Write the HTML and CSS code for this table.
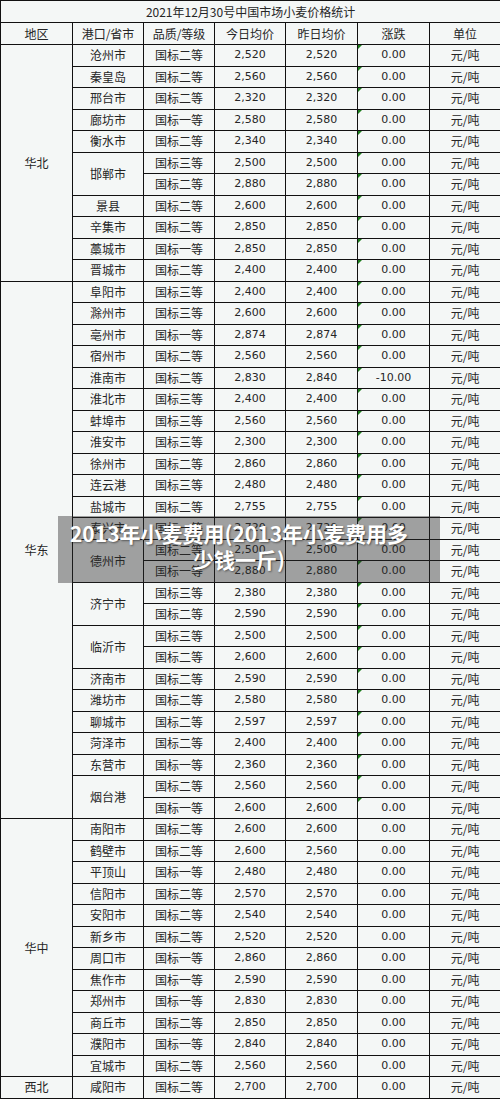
FILE: index.html
```html
<!DOCTYPE html>
<html lang="zh">
<head>
<meta charset="utf-8">
<title>2021年12月30号中国市场小麦价格统计</title>
<link rel="stylesheet" href="styles.css">
</head>
<body>
<div class="page">
<table class="grid">
<colgroup><col class="c1"><col class="c2"><col class="c3"><col class="c4"><col class="c5"><col class="c6"><col class="c7"></colgroup>
<tr class="t"><td colspan="7">2021年12月30号中国市场小麦价格统计</td></tr>
<tr class="h"><td>地区</td><td>港口/省市</td><td>品质/等级</td><td>今日均价</td><td>昨日均价</td><td>涨跌</td><td>单位</td></tr>
<tr><td rowspan="11">华北</td><td>沧州市</td><td>国标二等</td><td class="n">2,520</td><td class="n">2,520</td><td class="n g">0.00</td><td>元/吨</td></tr>
<tr><td>秦皇岛</td><td>国标二等</td><td class="n">2,560</td><td class="n">2,560</td><td class="n g">0.00</td><td>元/吨</td></tr>
<tr><td>邢台市</td><td>国标二等</td><td class="n">2,320</td><td class="n">2,320</td><td class="n g">0.00</td><td>元/吨</td></tr>
<tr><td>廊坊市</td><td>国标一等</td><td class="n">2,580</td><td class="n">2,580</td><td class="n g">0.00</td><td>元/吨</td></tr>
<tr><td>衡水市</td><td>国标二等</td><td class="n">2,340</td><td class="n">2,340</td><td class="n g">0.00</td><td>元/吨</td></tr>
<tr><td rowspan="2">邯郸市</td><td>国标三等</td><td class="n">2,500</td><td class="n">2,500</td><td class="n g">0.00</td><td>元/吨</td></tr>
<tr><td>国标二等</td><td class="n">2,880</td><td class="n">2,880</td><td class="n g">0.00</td><td>元/吨</td></tr>
<tr><td>景县</td><td>国标二等</td><td class="n">2,600</td><td class="n">2,600</td><td class="n g">0.00</td><td>元/吨</td></tr>
<tr><td>辛集市</td><td>国标二等</td><td class="n">2,850</td><td class="n">2,850</td><td class="n g">0.00</td><td>元/吨</td></tr>
<tr><td>藁城市</td><td>国标一等</td><td class="n">2,850</td><td class="n">2,850</td><td class="n g">0.00</td><td>元/吨</td></tr>
<tr><td>晋城市</td><td>国标二等</td><td class="n">2,400</td><td class="n">2,400</td><td class="n g">0.00</td><td>元/吨</td></tr>
<tr><td rowspan="25">华东</td><td>阜阳市</td><td>国标三等</td><td class="n">2,400</td><td class="n">2,400</td><td class="n g">0.00</td><td>元/吨</td></tr>
<tr><td>滁州市</td><td>国标三等</td><td class="n">2,600</td><td class="n">2,600</td><td class="n g">0.00</td><td>元/吨</td></tr>
<tr><td>亳州市</td><td>国标一等</td><td class="n">2,874</td><td class="n">2,874</td><td class="n g">0.00</td><td>元/吨</td></tr>
<tr><td>宿州市</td><td>国标二等</td><td class="n">2,560</td><td class="n">2,560</td><td class="n g">0.00</td><td>元/吨</td></tr>
<tr><td>淮南市</td><td>国标二等</td><td class="n">2,830</td><td class="n">2,840</td><td class="n g">-10.00</td><td>元/吨</td></tr>
<tr><td>淮北市</td><td>国标三等</td><td class="n">2,400</td><td class="n">2,400</td><td class="n g">0.00</td><td>元/吨</td></tr>
<tr><td>蚌埠市</td><td>国标三等</td><td class="n">2,560</td><td class="n">2,560</td><td class="n g">0.00</td><td>元/吨</td></tr>
<tr><td>淮安市</td><td>国标三等</td><td class="n">2,300</td><td class="n">2,300</td><td class="n g">0.00</td><td>元/吨</td></tr>
<tr><td>徐州市</td><td>国标二等</td><td class="n">2,860</td><td class="n">2,860</td><td class="n g">0.00</td><td>元/吨</td></tr>
<tr><td>连云港</td><td>国标三等</td><td class="n">2,480</td><td class="n">2,480</td><td class="n g">0.00</td><td>元/吨</td></tr>
<tr><td>盐城市</td><td>国标二等</td><td class="n">2,755</td><td class="n">2,755</td><td class="n g">0.00</td><td>元/吨</td></tr>
<tr><td>泰兴市</td><td>国标一等</td><td class="n">2,720</td><td class="n">2,720</td><td class="n g">0.00</td><td>元/吨</td></tr>
<tr><td rowspan="2">德州市</td><td>国标二等</td><td class="n">2,500</td><td class="n">2,500</td><td class="n g">0.00</td><td>元/吨</td></tr>
<tr><td>国标一等</td><td class="n">2,880</td><td class="n">2,880</td><td class="n g">0.00</td><td>元/吨</td></tr>
<tr><td rowspan="2">济宁市</td><td>国标三等</td><td class="n">2,380</td><td class="n">2,380</td><td class="n g">0.00</td><td>元/吨</td></tr>
<tr><td>国标二等</td><td class="n">2,590</td><td class="n">2,590</td><td class="n g">0.00</td><td>元/吨</td></tr>
<tr><td rowspan="2">临沂市</td><td>国标三等</td><td class="n">2,500</td><td class="n">2,500</td><td class="n g">0.00</td><td>元/吨</td></tr>
<tr><td>国标二等</td><td class="n">2,600</td><td class="n">2,600</td><td class="n g">0.00</td><td>元/吨</td></tr>
<tr><td>济南市</td><td>国标二等</td><td class="n">2,590</td><td class="n">2,590</td><td class="n g">0.00</td><td>元/吨</td></tr>
<tr><td>潍坊市</td><td>国标二等</td><td class="n">2,580</td><td class="n">2,580</td><td class="n g">0.00</td><td>元/吨</td></tr>
<tr><td>聊城市</td><td>国标二等</td><td class="n">2,597</td><td class="n">2,597</td><td class="n g">0.00</td><td>元/吨</td></tr>
<tr><td>菏泽市</td><td>国标二等</td><td class="n">2,400</td><td class="n">2,400</td><td class="n g">0.00</td><td>元/吨</td></tr>
<tr><td>东营市</td><td>国标一等</td><td class="n">2,360</td><td class="n">2,360</td><td class="n g">0.00</td><td>元/吨</td></tr>
<tr><td rowspan="2">烟台港</td><td>国标二等</td><td class="n">2,560</td><td class="n">2,560</td><td class="n g">0.00</td><td>元/吨</td></tr>
<tr><td>国标一等</td><td class="n">2,600</td><td class="n">2,600</td><td class="n g">0.00</td><td>元/吨</td></tr>
<tr><td rowspan="12">华中</td><td>南阳市</td><td>国标二等</td><td class="n">2,600</td><td class="n">2,600</td><td class="n">0.00</td><td>元/吨</td></tr>
<tr><td>鹤壁市</td><td>国标二等</td><td class="n">2,600</td><td class="n">2,560</td><td class="n">0.00</td><td>元/吨</td></tr>
<tr><td>平顶山</td><td>国标一等</td><td class="n">2,480</td><td class="n">2,480</td><td class="n">0.00</td><td>元/吨</td></tr>
<tr><td>信阳市</td><td>国标二等</td><td class="n">2,570</td><td class="n">2,570</td><td class="n">0.00</td><td>元/吨</td></tr>
<tr><td>安阳市</td><td>国标二等</td><td class="n">2,540</td><td class="n">2,540</td><td class="n">0.00</td><td>元/吨</td></tr>
<tr><td>新乡市</td><td>国标二等</td><td class="n">2,520</td><td class="n">2,520</td><td class="n">0.00</td><td>元/吨</td></tr>
<tr><td>周口市</td><td>国标一等</td><td class="n">2,860</td><td class="n">2,860</td><td class="n">0.00</td><td>元/吨</td></tr>
<tr><td>焦作市</td><td>国标一等</td><td class="n">2,590</td><td class="n">2,590</td><td class="n">0.00</td><td>元/吨</td></tr>
<tr><td>郑州市</td><td>国标一等</td><td class="n">2,830</td><td class="n">2,830</td><td class="n">0.00</td><td>元/吨</td></tr>
<tr><td>商丘市</td><td>国标二等</td><td class="n">2,850</td><td class="n">2,850</td><td class="n">0.00</td><td>元/吨</td></tr>
<tr><td>濮阳市</td><td>国标一等</td><td class="n">2,840</td><td class="n">2,840</td><td class="n">0.00</td><td>元/吨</td></tr>
<tr><td>宜城市</td><td>国标二等</td><td class="n">2,560</td><td class="n">2,560</td><td class="n">0.00</td><td>元/吨</td></tr>
<tr><td>西北</td><td>咸阳市</td><td>国标二等</td><td class="n">2,700</td><td class="n">2,700</td><td class="n">0.00</td><td>元/吨</td></tr>
</table>
<div class="caption">2013年小麦费用(2013年小麦费用多少钱一斤)</div>
</div>
</body>
</html>
```
FILE: styles.css
```css
html, body {
  margin: 0;
  padding: 0;
  background: #f4f7f6;
}
.page {
  position: relative;
  width: 500px;
  height: 1099px;
  overflow: hidden;
}
.grid {
  width: 500px;
  table-layout: fixed;
  border-collapse: collapse;
  background: #f4f7f6;
  font-family: "Noto Sans CJK SC", "Noto Sans", sans-serif;
  font-size: 12px;
  color: #262626;
}
.c1 { width: 72px; }
.c2 { width: 71px; }
.c3 { width: 71px; }
.c4 { width: 71px; }
.c5 { width: 72px; }
.c6 { width: 72px; }
.c7 { width: 71px; }
.grid td {
  border: 1.5px solid #111;
  padding: 0;
  text-align: center;
  vertical-align: middle;
  line-height: 14px;
  white-space: nowrap;
}
.grid tr { height: 21.5px; }
.grid tr.t, .grid tr.h { height: 22px; }
.grid td.n {
  font-family: "DejaVu Sans", "Noto Sans CJK SC", sans-serif;
  font-size: 11px;
}
.grid td.g { position: relative; }
.grid td.g::before {
  content: "";
  position: absolute;
  left: 0;
  top: 0;
  width: 0;
  height: 0;
  border-top: 4px solid #1b7d1b;
  border-right: 4px solid transparent;
}
.caption {
  position: absolute;
  left: 58px;
  top: 516px;
  width: 382px;
  height: 67px;
  box-sizing: border-box;
  padding: 4px 28px 0 8px;
  background: rgba(40, 40, 40, 0.42);
  color: #fff;
  font-family: "Noto Sans CJK SC", sans-serif;
  font-weight: 700;
  font-size: 21px;
  line-height: 26px;
  text-align: center;
  text-shadow: 1px 1px 2px rgba(0, 0, 0, 0.45);
}
```
